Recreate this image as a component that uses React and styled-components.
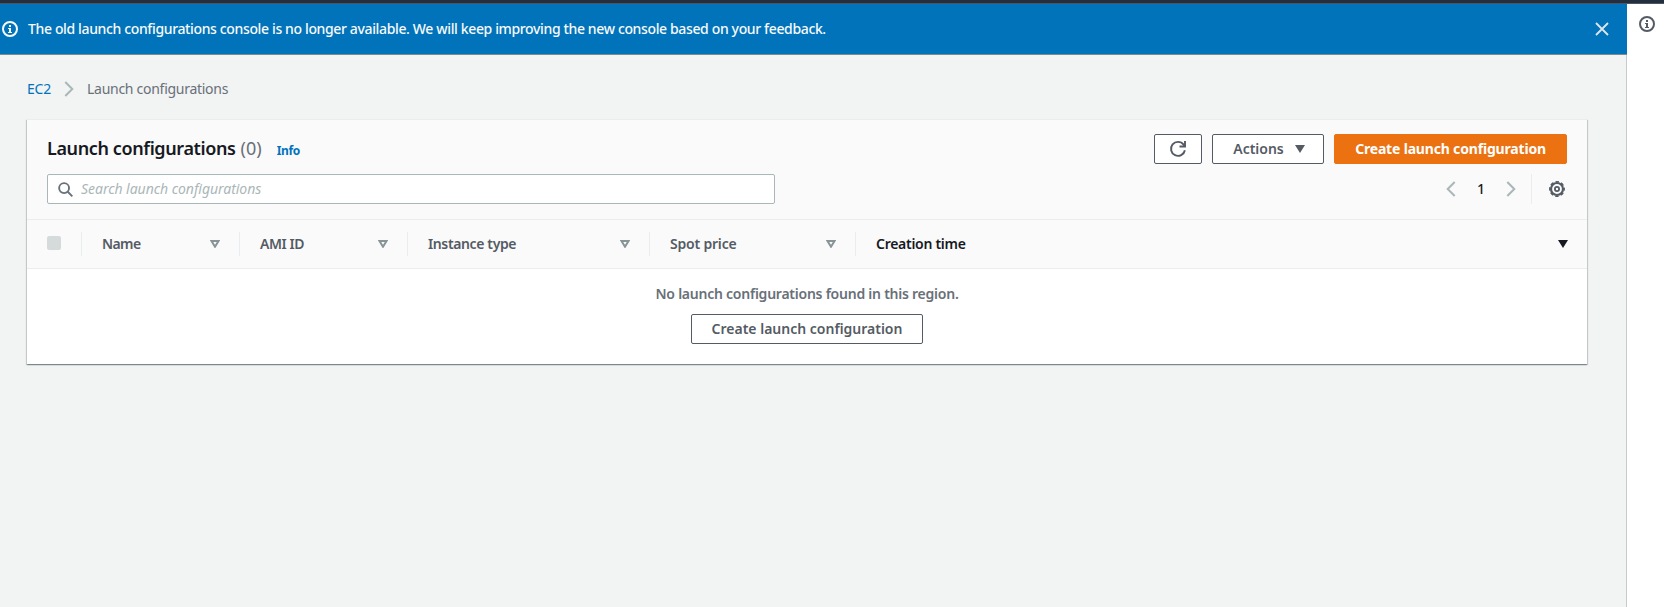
import React from 'react';
import styled, { createGlobalStyle } from 'styled-components';

const Global = createGlobalStyle`
  *, *::before, *::after { box-sizing: border-box; }
  body {
    margin: 0;
    background: #f2f3f3;
    color: #16191f;
    font-family: "Noto Sans", "Open Sans", sans-serif;
    font-size: 14px;
    line-height: 22px;
  }
  button, input { font: inherit; }
  svg { display: block; flex: none; }
`;

const Page = styled.div`
  display: flex;
  flex-direction: column;
  height: 607px;
  overflow: hidden;
`;

const TopEdge = styled.div`
  flex: none;
  height: 4px;
  background: #232f3e;
  border-bottom: 1px solid #4b5560;
`;

const Shell = styled.div`
  display: flex;
  flex: 1;
  min-height: 0;
`;

const Main = styled.main`
  flex: 1;
  min-width: 0;
  display: flex;
  flex-direction: column;
`;

const ToolsRail = styled.aside`
  flex: none;
  width: 37px;
  padding: 12px 0 0 12px;
  background: #fff;
`;

const Flash = styled.div`
  flex: none;
  display: flex;
  align-items: center;
  height: 51px;
  padding: 0 17px 1px 2px;
  background: #0073bb;
  border-bottom: 1px solid #7b8a94;
  color: #f8fafa;
`;

const FlashText = styled.span`
  flex: 1;
  margin-left: 10px;
  font-weight: 500;
  letter-spacing: -0.36px;
  white-space: nowrap;
`;

const IconButton = styled.button`
  display: flex;
  padding: 0;
  border: 0;
  background: none;
  color: ${(p) => p.$color || 'inherit'};
`;

const Content = styled.div`
  flex: 1;
  padding: 0 39px 0 27px;
  border-right: 1px solid #c3cbcc;
`;

const Breadcrumbs = styled.nav`
  display: flex;
  align-items: center;
  height: 64px;
  padding-top: 4px;
`;

const Crumb = styled.span`
  color: ${(p) => (p.$link ? '#0073bb' : '#687078')};
  letter-spacing: ${(p) => (p.$link ? '-0.2px' : '-0.28px')};
`;

const CrumbSeparator = styled.span`
  padding: 0 13px 0 13px;
  color: #aab7b8;
`;

const Card = styled.section`
  height: 245px;
  background: #fff;
  border-top: 1px solid #eaeded;
  box-shadow:
    0 1px 1px 0 rgba(0, 28, 36, 0.3),
    1px 1px 1px 0 rgba(0, 28, 36, 0.15),
    -1px 1px 1px 0 rgba(0, 28, 36, 0.15);
`;

const CardHeader = styled.header`
  height: 100px;
  padding: 14px 20px 0;
  background: #fafafa;
  border-bottom: 1px solid #eaeded;
`;

const HeaderRow = styled.div`
  display: flex;
  align-items: center;
  justify-content: space-between;
  height: 30px;
  margin-bottom: ${(p) => p.$gap || 0}px;
`;

const TitleGroup = styled.div`
  display: flex;
  align-items: baseline;
`;

const Title = styled.h2`
  margin: 0;
  font-size: 18px;
  font-weight: 600;
  letter-spacing: -0.38px;
`;

const Counter = styled.span`
  margin-left: 5px;
  color: #687078;
  font-size: 18px;
`;

const InfoLink = styled.a`
  margin-left: 15px;
  color: #0073bb;
  font-size: 12px;
  font-weight: 700;
  letter-spacing: -0.3px;
`;

const ButtonGroup = styled.div`
  display: flex;
  gap: 10px;
`;

const Button = styled.button`
  display: inline-flex;
  align-items: center;
  justify-content: center;
  gap: 11px;
  width: ${(p) => p.$width}px;
  height: 30px;
  padding: ${(p) => (p.$menu ? '0 0 0 2px' : '0')};
  border: 1px solid ${(p) => (p.$primary ? '#ec7211' : '#545b64')};
  border-radius: 2px;
  background: ${(p) => (p.$primary ? '#ec7211' : '#fff')};
  color: ${(p) => (p.$primary ? '#fff' : '#545b64')};
  font-weight: ${(p) => (p.$primary ? 700 : 600)};
  letter-spacing: ${(p) => (p.$primary ? '-0.18px' : '0')};
  white-space: nowrap;
`;

const SearchBox = styled.label`
  display: flex;
  align-items: center;
  width: 728px;
  height: 30px;
  padding: 0 10px;
  background: #fff;
  border: 1px solid #aab7b8;
  border-radius: 2px;
  color: #687078;
`;

const SearchInput = styled.input`
  flex: 1;
  min-width: 0;
  margin-left: 8px;
  padding: 0;
  border: 0;
  outline: 0;
  background: none;
  letter-spacing: -0.04px;
  &::placeholder {
    color: #aab7b8;
    font-style: italic;
    opacity: 1;
  }
`;

const Pager = styled.div`
  display: flex;
  align-items: center;
  color: #aab7b8;
`;

const PageNumber = styled.span`
  width: 50px;
  color: #16191f;
  font-weight: 500;
  text-align: center;
`;

const Preferences = styled.div`
  display: flex;
  align-items: center;
  height: 30px;
  margin-left: 15px;
  padding: 0 2px 0 17px;
  border-left: 1px solid #eaeded;
  color: #545b64;
`;

const TableHead = styled.div`
  display: grid;
  grid-template-columns: 55px 158px 168px 242px 206px 1fr;
  align-items: center;
  height: 49px;
  background: #fafafa;
  border-bottom: 1px solid #eaeded;
`;

const HeadCell = styled.div`
  display: flex;
  align-items: center;
  justify-content: space-between;
  height: 24px;
  padding: 0 19px 0 20px;
  border-right: ${(p) => (p.$last ? '0' : '1px solid #eaeded')};
  color: ${(p) => (p.$sorted ? '#16191f' : '#545b64')};
  font-weight: 600;
  letter-spacing: ${(p) => p.$spacing || 0}px;
`;

const Checkbox = styled.span`
  width: 14px;
  height: 14px;
  margin-top: -2px;
  border-radius: 2px;
  background: #d5dbdb;
`;

const Empty = styled.div`
  display: flex;
  flex-direction: column;
  align-items: center;
  padding-top: 14px;
`;

const EmptyText = styled.p`
  margin: 0 0 9px;
  color: #687078;
  font-weight: 600;
  letter-spacing: -0.24px;
`;

const stroke = { fill: 'none', stroke: 'currentColor', strokeWidth: 2 };

const InfoIcon = () => (
  <svg width="16" height="16" viewBox="0 0 16 16">
    <circle cx="8" cy="8" r="7" {...stroke} />
    <path d="M7 4h2v2H7zM6 7h3v4h1v1H6v-1h1V8H6z" fill="currentColor" />
  </svg>
);

const CloseIcon = () => (
  <svg width="16" height="16" viewBox="0 0 16 16">
    <path d="M2 2l12 12M14 2L2 14" {...stroke} stroke="#dfe6ea" strokeWidth="1.8" />
  </svg>
);

const Chevron = ({ left }) => (
  <svg width="10" height="16" viewBox="0 0 10 16">
    <path d={left ? 'M8.7 1L1.7 8l7 7' : 'M1.3 1l7 7-7 7'} {...stroke} />
  </svg>
);

const SearchIcon = () => (
  <svg width="15" height="15" viewBox="0 0 16 16">
    <circle cx="6.5" cy="6.5" r="5.3" {...stroke} />
    <path d="M10.4 10.4l4.9 4.9" {...stroke} />
  </svg>
);

const RefreshIcon = () => (
  <svg width="18" height="18" viewBox="0 0 18 18">
    <path d="M15.9 10.2A7 7 0 1 1 14.6 4.6L16 6.5" {...stroke} strokeWidth="1.9" />
    <path d="M16 1v5.5h-5.5" {...stroke} strokeWidth="1.9" />
  </svg>
);

const GearIcon = () => (
  <svg width="16" height="16" viewBox="0 0 16 16">
    <circle cx="8" cy="8" r="6" {...stroke} strokeWidth="2.2" />
    <circle cx="8" cy="8" r="7.3" {...stroke} strokeWidth="1.3" strokeDasharray="3.5 2.233" strokeDashoffset="1.75" />
    <circle cx="8" cy="8" r="2.1" {...stroke} strokeWidth="1.8" />
  </svg>
);

const Caret = ({ open }) =>
  open ? (
    <svg width="10" height="8" viewBox="0 0 10 8">
      <path d="M1.5 1h7L5 6.7z" {...stroke} stroke="#879596" />
    </svg>
  ) : (
    <svg width="10" height="8" viewBox="0 0 10 8">
      <path d="M0 0h10L5 8z" fill="currentColor" />
    </svg>
  );

const columns = [
  { label: 'Name', spacing: -0.6 },
  { label: 'AMI ID', spacing: -0.45 },
  { label: 'Instance type', spacing: -0.37 },
  { label: 'Spot price', spacing: -0.2 },
  { label: 'Creation time', spacing: -0.28, sorted: true },
];

export default function App() {
  return (
    <>
      <Global />
      <Page>
        <TopEdge />
        <Shell>
          <Main>
            <Flash>
              <InfoIcon />
              <FlashText>
                The old launch configurations console is no longer available. We will keep improving the new console based on your feedback.
              </FlashText>
              <IconButton aria-label="Dismiss"><CloseIcon /></IconButton>
            </Flash>
            <Content>
              <Breadcrumbs>
                <Crumb $link>EC2</Crumb>
                <CrumbSeparator><Chevron /></CrumbSeparator>
                <Crumb>Launch configurations</Crumb>
              </Breadcrumbs>
              <Card>
                <CardHeader>
                  <HeaderRow $gap={10}>
                    <TitleGroup>
                      <Title>Launch configurations</Title>
                      <Counter>(0)</Counter>
                      <InfoLink>Info</InfoLink>
                    </TitleGroup>
                    <ButtonGroup>
                      <Button $width={48} aria-label="Refresh"><RefreshIcon /></Button>
                      <Button $width={112} $menu>Actions<Caret /></Button>
                      <Button $width={233} $primary>Create launch configuration</Button>
                    </ButtonGroup>
                  </HeaderRow>
                  <HeaderRow>
                    <SearchBox>
                      <SearchIcon />
                      <SearchInput placeholder="Search launch configurations" />
                    </SearchBox>
                    <Pager>
                      <Chevron left />
                      <PageNumber>1</PageNumber>
                      <Chevron />
                      <Preferences><GearIcon /></Preferences>
                    </Pager>
                  </HeaderRow>
                </CardHeader>
                <TableHead>
                  <HeadCell><Checkbox /></HeadCell>
                  {columns.map((c) => (
                    <HeadCell key={c.label} $spacing={c.spacing} $sorted={c.sorted} $last={c.sorted}>
                      {c.label}
                      <Caret open={!c.sorted} />
                    </HeadCell>
                  ))}
                </TableHead>
                <Empty>
                  <EmptyText>No launch configurations found in this region.</EmptyText>
                  <Button $width={232}>Create launch configuration</Button>
                </Empty>
              </Card>
            </Content>
          </Main>
          <ToolsRail>
            <IconButton aria-label="Info" $color="#545b64"><InfoIcon /></IconButton>
          </ToolsRail>
        </Shell>
      </Page>
    </>
  );
}
